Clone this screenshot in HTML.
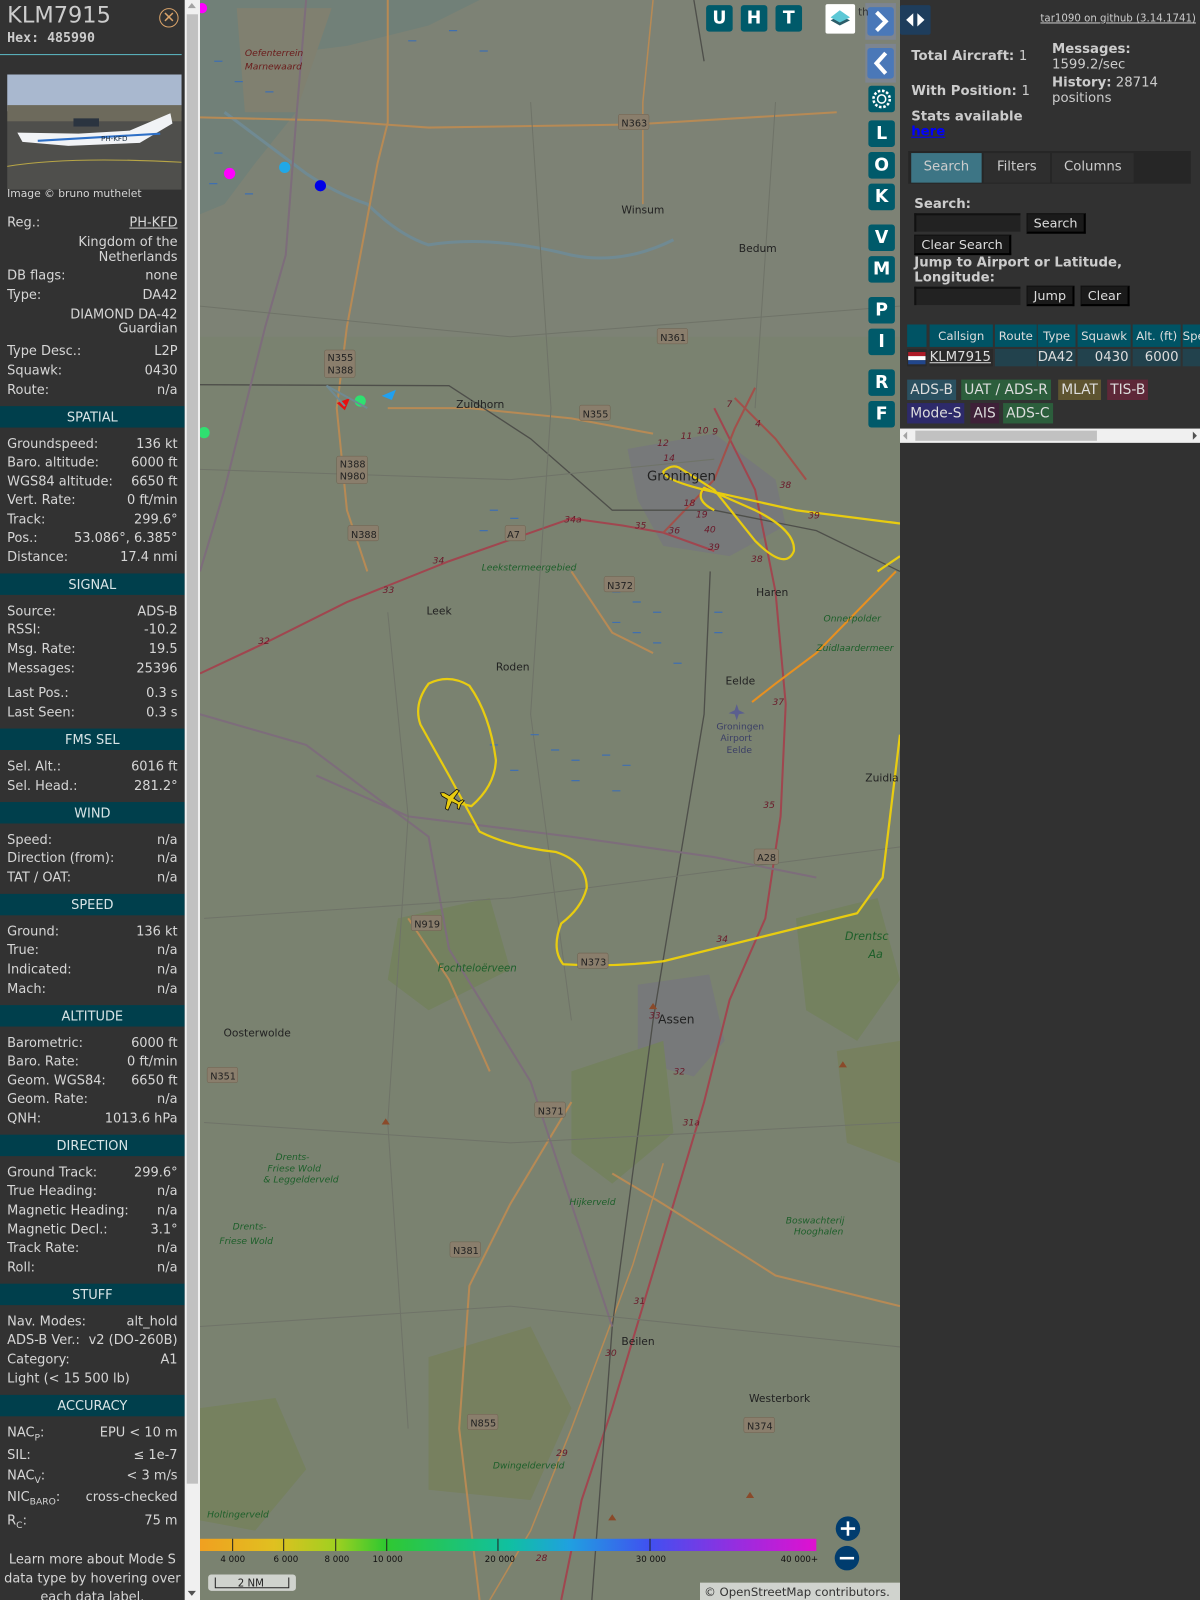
<!DOCTYPE html>
<html><head><meta charset="utf-8">
<style>
html,body{margin:0;padding:0;width:1200px;height:1600px;overflow:hidden;background:#313131;}
#w{position:absolute;left:0;top:0;width:1176px;height:1568px;transform:scale(1.020408);transform-origin:0 0;font-family:"DejaVu Sans","Liberation Sans",sans-serif;color:#d6d6d6;}
#lp{position:absolute;left:0;top:0;width:181px;height:1568px;background:#323232;overflow:hidden;font-size:12.7px;}
.r{position:absolute;left:7px;right:7px;height:18px;line-height:18px;white-space:nowrap;}
.r .v{position:absolute;right:0;top:0;}
.h{position:absolute;left:0;width:181px;height:21px;line-height:21px;background:#003f4c;color:#d8e4e6;text-align:center;font-size:12.7px;}
#sb{position:absolute;left:181px;top:0;width:15px;height:1568px;background:#f0f0f0;}
#map{position:absolute;left:196px;top:0;width:686px;height:1568px;overflow:hidden;background:#7a8270;}
#rp{position:absolute;left:882px;top:0;width:294px;height:1568px;background:#313131;}
.mb{position:absolute;width:26px;height:26px;background:#005a6a;border-radius:3px;color:#fff;font-weight:bold;font-size:17px;text-align:center;line-height:26px;font-family:"DejaVu Sans",sans-serif;}
.tag{position:absolute;height:20px;line-height:20px;font-size:13.5px;padding:0 3px;color:#ddd;}
.btn{position:absolute;background:#1a1a1a;border:1px solid #111;border-right:2px solid #000;border-bottom:2px solid #000;height:17px;line-height:17px;font-size:12.5px;color:#ddd;padding:0 6px;}
.inp{position:absolute;background:#222;border-top:2px solid #111;border-left:2px solid #111;width:102px;height:16px;}
.th{position:absolute;top:318px;height:22px;line-height:22px;background:#005364;color:#ddd;font-size:11.5px;text-align:center;}
.td{position:absolute;top:342px;height:17px;line-height:17px;background:#22424d;color:#ddd;font-size:13px;text-align:right;}
</style></head><body><div id="w">

<div id="lp">
 <div style="position:absolute;left:7px;top:3px;font-size:22px;color:#ccc;">KLM7915</div>
 <div style="position:absolute;left:7px;top:30px;font-size:13px;font-weight:bold;font-family:'DejaVu Sans Mono',monospace;color:#ccc;">Hex: 485990</div>
 <div style="position:absolute;left:156px;top:8px;width:17px;height:17px;border:1.5px solid #d9a36a;border-radius:50%;color:#d9a36a;text-align:center;line-height:17px;font-size:15px;">✕</div>
 <div style="position:absolute;left:0;top:53px;width:178px;height:1px;background:#5bb8c4;"></div>
 <svg style="position:absolute;left:7px;top:73px" width="171" height="113" viewBox="0 0 171 113">
  <rect width="171" height="36" fill="#a9b8cf"/><rect y="30" width="171" height="16" fill="#6d6a5c"/><rect y="46" width="171" height="67" fill="#4f4f4c"/>
  <path d="M0 90 Q60 80 171 86" stroke="#b8a646" stroke-width="1" fill="none"/>
  <path d="M10 57 L70 58 L120 55 L160 38 L162 48 L130 67 L60 70 L15 66Z" fill="#f1f3f6"/>
  <path d="M30 65 L150 58" stroke="#2d6fc6" stroke-width="2"/>
  <rect x="65" y="43" width="25" height="8" fill="#2b3440"/>
  <text x="92" y="65" font-size="7" fill="#234" font-family="DejaVu Sans">PH-KFD</text>
 </svg>
 <div style="position:absolute;left:7px;top:184px;font-size:10.5px;">Image © bruno muthelet</div>
 <div class="r" style="top:209px">Reg.:<span class="v" style="text-decoration:underline">PH-KFD</span></div>
 <div class="r" style="top:228px;text-align:right">Kingdom of the</div>
 <div class="r" style="top:243px;text-align:right">Netherlands</div>
 <div class="r" style="top:261px">DB flags:<span class="v">none</span></div>
 <div class="r" style="top:280px">Type:<span class="v">DA42</span></div>
 <div class="r" style="top:299px;text-align:right">DIAMOND DA-42</div>
 <div class="r" style="top:313px;text-align:right">Guardian</div>
 <div class="r" style="top:335px">Type Desc.:<span class="v">L2P</span></div>
 <div class="r" style="top:354px">Squawk:<span class="v">0430</span></div>
 <div class="r" style="top:373px">Route:<span class="v">n/a</span></div>
 <div class="h" style="top:398px">SPATIAL</div>
 <div class="r" style="top:426px">Groundspeed:<span class="v">136 kt</span></div>
 <div class="r" style="top:444px">Baro. altitude:<span class="v">6000 ft</span></div>
 <div class="r" style="top:463px">WGS84 altitude:<span class="v">6650 ft</span></div>
 <div class="r" style="top:481px">Vert. Rate:<span class="v">0 ft/min</span></div>
 <div class="r" style="top:500px">Track:<span class="v">299.6°</span></div>
 <div class="r" style="top:518px">Pos.:<span class="v">53.086°, 6.385°</span></div>
 <div class="r" style="top:537px">Distance:<span class="v">17.4 nmi</span></div>
 <div class="h" style="top:562px">SIGNAL</div>
 <div class="r" style="top:590px">Source:<span class="v">ADS-B</span></div>
 <div class="r" style="top:608px">RSSI:<span class="v">-10.2</span></div>
 <div class="r" style="top:627px">Msg. Rate:<span class="v">19.5</span></div>
 <div class="r" style="top:646px">Messages:<span class="v">25396</span></div>
 <div class="r" style="top:670px">Last Pos.:<span class="v">0.3 s</span></div>
 <div class="r" style="top:689px">Last Seen:<span class="v">0.3 s</span></div>
 <div class="h" style="top:714px">FMS SEL</div>
 <div class="r" style="top:742px">Sel. Alt.:<span class="v">6016 ft</span></div>
 <div class="r" style="top:761px">Sel. Head.:<span class="v">281.2°</span></div>
 <div class="h" style="top:786px">WIND</div>
 <div class="r" style="top:814px">Speed:<span class="v">n/a</span></div>
 <div class="r" style="top:832px">Direction (from):<span class="v">n/a</span></div>
 <div class="r" style="top:851px">TAT / OAT:<span class="v">n/a</span></div>
 <div class="h" style="top:876px">SPEED</div>
 <div class="r" style="top:904px">Ground:<span class="v">136 kt</span></div>
 <div class="r" style="top:922px">True:<span class="v">n/a</span></div>
 <div class="r" style="top:941px">Indicated:<span class="v">n/a</span></div>
 <div class="r" style="top:960px">Mach:<span class="v">n/a</span></div>
 <div class="h" style="top:985px">ALTITUDE</div>
 <div class="r" style="top:1013px">Barometric:<span class="v">6000 ft</span></div>
 <div class="r" style="top:1031px">Baro. Rate:<span class="v">0 ft/min</span></div>
 <div class="r" style="top:1050px">Geom. WGS84:<span class="v">6650 ft</span></div>
 <div class="r" style="top:1068px">Geom. Rate:<span class="v">n/a</span></div>
 <div class="r" style="top:1087px">QNH:<span class="v">1013.6 hPa</span></div>
 <div class="h" style="top:1112px">DIRECTION</div>
 <div class="r" style="top:1140px">Ground Track:<span class="v">299.6°</span></div>
 <div class="r" style="top:1158px">True Heading:<span class="v">n/a</span></div>
 <div class="r" style="top:1177px">Magnetic Heading:<span class="v">n/a</span></div>
 <div class="r" style="top:1196px">Magnetic Decl.:<span class="v">3.1°</span></div>
 <div class="r" style="top:1214px">Track Rate:<span class="v">n/a</span></div>
 <div class="r" style="top:1233px">Roll:<span class="v">n/a</span></div>
 <div class="h" style="top:1258px">STUFF</div>
 <div class="r" style="top:1286px">Nav. Modes:<span class="v">alt_hold</span></div>
 <div class="r" style="top:1304px">ADS-B Ver.:<span class="v">v2 (DO-260B)</span></div>
 <div class="r" style="top:1323px">Category:<span class="v">A1</span></div>
 <div class="r" style="top:1342px">Light (&lt; 15 500 lb)</div>
 <div class="h" style="top:1367px">ACCURACY</div>
 <div class="r" style="top:1395px">NAC<sub style="font-size:9px">P</sub>:<span class="v">EPU &lt; 10 m</span></div>
 <div class="r" style="top:1417px">SIL:<span class="v">≤ 1e-7</span></div>
 <div class="r" style="top:1437px">NAC<sub style="font-size:9px">V</sub>:<span class="v">&lt; 3 m/s</span></div>
 <div class="r" style="top:1458px">NIC<sub style="font-size:9px">BARO</sub>:<span class="v">cross-checked</span></div>
 <div class="r" style="top:1481px">R<sub style="font-size:9px">C</sub>:<span class="v">75 m</span></div>
 <div style="position:absolute;left:0;width:181px;top:1519px;text-align:center;line-height:18.5px;">Learn more about Mode S<br>data type by hovering over<br>each data label.</div>
</div>
<div id="sb"><div style="position:absolute;left:2px;top:14px;width:11px;height:1440px;background:#c1c1c1;"></div>
 <div style="position:absolute;left:3px;top:3px;border:4px solid transparent;border-bottom:5px solid #a3a3a3;border-top:0;"></div>
 <div style="position:absolute;left:3px;top:1559px;border:4px solid transparent;border-top:5px solid #505050;border-bottom:0;"></div></div>

<div id="map">
<svg width="686" height="1568" viewBox="196 0 686 1568" style="position:absolute;left:0;top:0" font-family="DejaVu Sans,sans-serif">
 <rect x="196" y="0" width="686" height="1568" fill="#7a8270"/>
 <rect x="196" y="0" width="686" height="330" fill="#7d8275"/>
 <path d="M196 0 L470 0 L420 25 L340 45 L300 50 L290 110 L250 160 L220 200 L196 210Z" fill="#718078"/>
 <path d="M232 8 L325 8 L290 110 L240 110Z" fill="#808070"/>
 <path d="M220 110 Q260 140 300 170 Q330 190 360 200 Q390 230 420 240 Q480 230 560 250 Q610 260 660 235" stroke="#708a93" stroke-width="3" fill="none"/>
 <path d="M615 440 L700 425 L760 470 L770 515 L715 545 L650 535 L625 490Z" fill="#77797a"/>
 <path d="M625 965 L695 955 L710 1020 L680 1055 L625 1040Z" fill="#77797a"/>
 <path d="M390 900 L480 880 L500 950 L420 990 L380 960Z" fill="#74815f"/>
 <path d="M560 1050 L650 1020 L660 1110 L600 1160 L560 1130Z" fill="#74815f"/>
 <path d="M420 1330 L520 1300 L560 1380 L520 1470 L420 1460Z" fill="#77805f"/>
 <path d="M196 1380 L270 1370 L300 1440 L250 1500 L196 1490Z" fill="#76815f"/>
 <path d="M780 900 L860 880 L882 960 L840 1020 L790 990Z" fill="#74815f"/>
 <path d="M820 1030 L882 1020 L882 1140 L830 1120Z" fill="#77805f"/>
 <g fill="none" stroke-width="2">
  <path d="M196 660 L260 630 L340 590 L440 550 L560 508 L610 515 L650 522 L700 540" stroke="#a0464f"/>
  <path d="M700 400 L720 440 L740 480 L760 580 L770 690 L765 800 L750 900 L715 980 L690 1080 L660 1180 L630 1280 L600 1380 L570 1470 L550 1568" stroke="#a0464f"/>
  <path d="M720 390 L760 430 L790 470" stroke="#a2504a"/>
  <path d="M650 522 L700 470 L720 420 L740 380" stroke="#a2504a"/>
  <path d="M380 0 L380 120 L370 160 L340 320 L330 400 L340 500 L360 560" stroke="#b78a55"/>
  <path d="M196 115 L320 118 L420 125 L620 122 L820 110" stroke="#b78a55"/>
  <path d="M380 400 L460 400 L560 410 L640 425" stroke="#b78a55"/>
  <path d="M560 560 L600 620 L640 640" stroke="#b78a55"/>
  <path d="M400 900 L440 960 L480 1050" stroke="#b78a55"/>
  <path d="M560 1080 L500 1180 L460 1260 L450 1400 L470 1568" stroke="#b78a55"/>
  <path d="M600 1150 L650 1180 L760 1250 L882 1280" stroke="#b78a55"/>
  <path d="M630 200 L630 100 L640 0" stroke="#b78a55" stroke-width="1.5"/>
  <path d="M480 1568 L520 1500 L560 1400 L620 1240 L650 1140" stroke="#b78a55" stroke-width="1.5"/>
 </g>
 <g fill="none" stroke="#4e4f4a" stroke-width="1.3">
  <path d="M196 377 L440 378 L520 430 L600 500 L700 500 L800 520 L882 560"/>
  <path d="M696 560 L690 700 L640 1000 L600 1300 L580 1568"/>
  <path d="M680 0 L690 60"/>
 </g>
 <g fill="none" stroke="#7d6d7b" stroke-width="2">
  <path d="M300 0 L290 120 L280 250 L260 320 L240 400 L220 480 L196 560"/>
  <path d="M196 700 L300 730 L420 820 L440 930 L520 1060 L560 1180 L600 1300"/>
  <path d="M310 760 L400 800 L560 820 L700 840 L800 860"/>
 </g>
 <g fill="none" stroke="#6f7368" stroke-width="1">
  <path d="M196 300 L500 330 L882 300"/><path d="M196 460 L500 470 L700 450"/><path d="M200 900 L500 880 L882 830"/>
  <path d="M200 1100 L500 1120 L882 1100"/><path d="M196 1300 L500 1280 L882 1320"/><path d="M520 100 L540 400 L520 700 L560 1000"/>
  <path d="M380 600 L400 800 L380 1100 L400 1400"/><path d="M760 100 L740 400"/>
 </g>
 <g stroke="#3f6fb0" stroke-width="1.2">
  <path d="M480 500h8M500 508h8M470 520h8M520 720h8M540 735h8M560 745h8M500 755h8M590 740h8M610 750h8M480 730h8M560 765h8M600 775h8"/>
  <path d="M600 580h8M620 590h8M640 600h8M600 610h8M620 620h8M640 630h8M700 600h8M700 620h8M660 650h8"/>
  <path d="M210 60h8M230 80h8M260 90h8M400 40h8M440 30h8M470 50h8M210 150h8M205 180h8M240 190h8"/>
 </g>
 <g fill="none" stroke="#e8cc10" stroke-width="2.2" stroke-linejoin="round">
  <path d="M440 785 L462 790 Q485 770 486 745 Q480 700 460 672 Q440 660 420 670 Q405 690 412 710 L440 760 L470 815 Q500 830 545 835 Q575 845 575 870 Q570 890 550 905 Q540 930 552 945 Q600 948 650 942 L840 895 L865 860 L882 720"/>
  <path d="M882 513 L780 500 L690 480 Q650 470 650 462 Q658 455 665 458 L700 480 L740 530 Q770 560 778 540 Q780 520 740 500 L690 478 Q680 490 700 500"/>
  <path d="M882 545 L860 560"/>
 </g>
 <path d="M878 560 L800 640 L760 670 L737 688" stroke="#e89020" stroke-width="2" fill="none"/>
 <g transform="translate(442 783) rotate(-60)" fill="#e8cc10" stroke="#111" stroke-width="0.8">
  <path d="M0 -12 L2 -9 L2 -3 L11 0 L11 3 L2 2 L1.5 8 L5 10 L5 12 L0 11 L-5 12 L-5 10 L-1.5 8 L-2 2 L-11 3 L-11 0 L-2 -3 L-2 -9Z"/>
 </g>
 <path d="M722 690 l2 6 l6 3 l-6 1 l-2 6 l-2 -6 l-6 -1 l6 -3z" fill="#5b5f8f"/>
 <circle cx="225" cy="170" r="5.5" fill="#f0f"/><circle cx="279" cy="164" r="5.5" fill="#20a8e8"/><circle cx="314" cy="182" r="5.5" fill="#0000e8"/>
 <circle cx="198" cy="8" r="5" fill="#f0f"/><circle cx="200" cy="424" r="5.5" fill="#2fe070"/><circle cx="353" cy="393" r="5.5" fill="#2fe070"/>
 <path d="M330 395 L343 390 L338 402Z" fill="#e81010"/><path d="M374 388 L388 382 L384 392Z" fill="#20a0f0"/>
 <path d="M338 398 L320 378 L360 400" stroke="#708a93" stroke-width="2" fill="none"/>
 <g font-size="10.5" fill="#222">
  <text x="609" y="209">Winsum</text><text x="724" y="247">Bedum</text><text x="447" y="400">Zuidhorn</text>
  <text x="634" y="471" font-size="13">Groningen</text><text x="741" y="584">Haren</text><text x="418" y="602">Leek</text>
  <text x="486" y="657">Roden</text><text x="711" y="671">Eelde</text><text x="645" y="1003" font-size="12">Assen</text>
  <text x="219" y="1016">Oosterwolde</text><text x="609" y="1318">Beilen</text><text x="734" y="1374">Westerbork</text>
  <text x="848" y="766">Zuidla</text>
 </g>
 <g font-size="9" fill="#1d5f2a" font-style="italic">
  <text x="472" y="559">Leekstermeergebied</text><text x="429" y="952" font-size="10">Fochteloërveen</text>
  <text x="270" y="1137">Drents-</text><text x="262" y="1148">Friese Wold</text><text x="258" y="1159">&amp; Leggelderveld</text>
  <text x="228" y="1205">Drents-</text><text x="215" y="1219">Friese Wold</text><text x="558" y="1181">Hijkerveld</text>
  <text x="483" y="1439">Dwingelderveld</text><text x="203" y="1487">Holtingerveld</text><text x="770" y="1199">Boswachterij</text>
  <text x="778" y="1210">Hooghalen</text><text x="828" y="921" font-size="11">Drentsc</text><text x="851" y="939" font-size="11">Aa</text>
  <text x="807" y="609">Onnerpolder</text><text x="800" y="638">Zuidlaardermeer</text>
  <text x="702" y="715" fill="#3b3f66" font-style="normal">Groningen</text><text x="706" y="726" fill="#3b3f66" font-style="normal">Airport</text><text x="712" y="738" fill="#3b3f66" font-style="normal">Eelde</text>
 </g>
 <g font-size="9" fill="#6a1a1a" font-style="italic"><text x="240" y="55">Oefenterrein</text><text x="240" y="68">Marnewaard</text></g>
 <g font-size="9" fill="#6a1a2a" font-style="italic">
  <text x="253" y="631">32</text><text x="375" y="581">33</text><text x="424" y="552">34</text><text x="553" y="512">34a</text><text x="622" y="518">35</text>
  <text x="655" y="523">36</text><text x="670" y="496">18</text><text x="682" y="507">19</text><text x="690" y="522">40</text><text x="694" y="539">39</text>
  <text x="644" y="437">12</text><text x="667" y="430">11</text><text x="683" y="425">10</text><text x="698" y="426">9</text><text x="650" y="452">14</text>
  <text x="712" y="399">7</text><text x="740" y="418">4</text><text x="736" y="551">38</text><text x="757" y="691">37</text><text x="748" y="792">35</text>
  <text x="702" y="923">34</text><text x="636" y="998">33</text><text x="660" y="1053">32</text><text x="669" y="1103">31a</text><text x="621" y="1278">31</text>
  <text x="593" y="1329">30</text><text x="545" y="1427">29</text><text x="525" y="1530">28</text><text x="764" y="478">38</text><text x="792" y="508">39</text>
 </g>
 <g font-size="9.5" fill="#222">
  <g fill="#8a7e6c" stroke="#6e614f" stroke-width="0.5">
   <rect x="606" y="112" width="30" height="15" rx="2"/><rect x="318" y="343" width="30" height="27" rx="2"/><rect x="644" y="322" width="30" height="15" rx="2"/>
   <rect x="568" y="397" width="30" height="15" rx="2"/><rect x="330" y="447" width="30" height="27" rx="2"/><rect x="341" y="515" width="30" height="15" rx="2"/>
   <rect x="592" y="565" width="30" height="15" rx="2"/><rect x="495" y="515" width="20" height="15" rx="2"/><rect x="403" y="897" width="30" height="15" rx="2"/>
   <rect x="566" y="934" width="30" height="15" rx="2"/><rect x="739" y="832" width="24" height="15" rx="2"/><rect x="203" y="1046" width="30" height="15" rx="2"/>
   <rect x="524" y="1080" width="30" height="15" rx="2"/><rect x="441" y="1217" width="30" height="15" rx="2"/><rect x="458" y="1386" width="30" height="15" rx="2"/>
   <rect x="729" y="1389" width="30" height="15" rx="2"/>
  </g>
  <text x="609" y="124">N363</text><text x="321" y="354">N355</text><text x="321" y="366">N388</text><text x="647" y="334">N361</text>
  <text x="571" y="409">N355</text><text x="333" y="458">N388</text><text x="333" y="470">N980</text><text x="344" y="527">N388</text>
  <text x="595" y="577">N372</text><text x="497" y="527">A7</text><text x="406" y="909">N919</text><text x="569" y="946">N373</text>
  <text x="742" y="844">A28</text><text x="206" y="1058">N351</text><text x="527" y="1092">N371</text><text x="444" y="1229">N381</text>
  <text x="461" y="1398">N855</text><text x="732" y="1401">N374</text>
 </g>
 <g fill="#8a4a2a"><path d="M378 1096l4 6h-8z"/><path d="M640 983l4 6h-8z"/><path d="M826 1040l4 6h-8z"/><path d="M600 1484l4 6h-8z"/><path d="M735 1462l4 6h-8z"/></g>
 <defs><linearGradient id="g" x1="0" x2="1"><stop offset="0" stop-color="#f0a020"/><stop offset="0.12" stop-color="#e0c020"/><stop offset="0.22" stop-color="#a0d020"/><stop offset="0.3" stop-color="#30c830"/><stop offset="0.5" stop-color="#10c0a0"/><stop offset="0.6" stop-color="#20a0e0"/><stop offset="0.73" stop-color="#4050f0"/><stop offset="0.86" stop-color="#9030e0"/><stop offset="1" stop-color="#e010d0"/></linearGradient></defs>
 <rect x="196" y="1508" width="604" height="12" fill="url(#g)"/>
 <g stroke="#222" stroke-width="1"><path d="M228 1508v12M278 1508v12M329 1508v12M379 1508v12M488 1508v12M637 1508v12"/></g>
 <g font-size="8.5" fill="#111"><text x="216" y="1531">4 000</text><text x="268" y="1531">6 000</text><text x="318" y="1531">8 000</text><text x="365" y="1531">10 000</text><text x="475" y="1531">20 000</text><text x="623" y="1531">30 000</text><text x="765" y="1531">40 000+</text></g>
 <rect x="204" y="1543" width="86" height="16" rx="3" fill="#eee" fill-opacity="0.75"/>
 <path d="M211 1546v10h72v-10" stroke="#222" fill="none"/>
 <text x="233" y="1555" font-size="10" fill="#222">2 NM</text>
 <rect x="686" y="1551" width="196" height="17" fill="#eee" fill-opacity="0.75"/>
 <text x="690" y="1564" font-size="11.5" fill="#333">© OpenStreetMap contributors.</text>
 <circle cx="831" cy="1498" r="12" fill="#003c6e"/><path d="M824 1498h14M831 1491v14" stroke="#fff" stroke-width="2.5"/>
 <circle cx="830" cy="1527" r="12" fill="#003c6e"/><path d="M823 1527h14" stroke="#fff" stroke-width="2.5"/>
</svg>
 <div class="mb" style="left:496px;top:5px">U</div><div class="mb" style="left:530px;top:5px">H</div><div class="mb" style="left:564px;top:5px">T</div>
 <div style="position:absolute;left:613px;top:4px;width:29px;height:29px;background:#fff;border-radius:2px;"><svg width="29" height="29"><path d="M5 16 L14 21 L24 16 L14 11Z" fill="#2b5d6a"/><path d="M5 13 L14 18 L24 13 L14 6Z" fill="#5dc8d6"/></svg></div>
 <div style="position:absolute;left:652px;top:3px;width:30px;height:36px;background:#7d8590;"><div style="margin:4px 2px;width:26px;height:28px;background:#4a78b8;border-radius:3px;"><svg width="26" height="28"><path d="M9 5 L18 14 L9 23" stroke="#fff" stroke-width="4" fill="none"/></svg></div></div>
 <div style="position:absolute;left:652px;top:43px;width:30px;height:38px;background:#7d8590;"><div style="margin:4px 2px;width:26px;height:30px;background:#4a78b8;border-radius:3px;"><svg width="26" height="30"><path d="M18 5 L9 15 L18 25" stroke="#fff" stroke-width="4" fill="none"/></svg></div></div>
 <div class="mb" style="left:655px;top:84px"><svg width="26" height="26"><circle cx="13" cy="13" r="4" stroke="#fff" stroke-width="1.5" fill="none"/><circle cx="13" cy="13" r="8" stroke="#fff" stroke-width="2.5" stroke-dasharray="2.5 1.7" fill="none"/></svg></div>
 <div class="mb" style="left:655px;top:118px">L</div><div class="mb" style="left:655px;top:149px">O</div><div class="mb" style="left:655px;top:180px">K</div>
 <div class="mb" style="left:655px;top:220px">V</div><div class="mb" style="left:655px;top:251px">M</div><div class="mb" style="left:655px;top:291px">P</div>
 <div class="mb" style="left:655px;top:322px">I</div><div class="mb" style="left:655px;top:362px">R</div><div class="mb" style="left:655px;top:393px">F</div>
 <div style="position:absolute;left:645px;top:7px;font-size:10px;color:#333;">th</div>
</div>

<div id="rp">
 <div style="position:absolute;left:0;top:5px;width:30px;height:29px;background:#1e3d5c;border-radius:2px;"><svg width="30" height="29"><path d="M13 8 L6 14.5 L13 21Z M17 8 L24 14.5 L17 21Z" fill="#fff"/></svg></div>
 <div style="position:absolute;right:4px;top:13px;font-size:10px;text-decoration:underline;color:#ccc;">tar1090 on github (3.14.1741)</div>
 <div style="position:absolute;left:11px;top:48px;font-weight:bold;font-size:13px;color:#ccc;">Total Aircraft: <span style="font-weight:normal">1</span></div>
 <div style="position:absolute;left:11px;top:82px;font-weight:bold;font-size:13px;color:#ccc;">With Position: <span style="font-weight:normal">1</span></div>
 <div style="position:absolute;left:11px;top:107px;font-weight:bold;font-size:13px;color:#ccc;">Stats available</div>
 <div style="position:absolute;left:11px;top:122px;font-weight:bold;font-size:13px;color:#00f;text-decoration:underline;">here</div>
 <div style="position:absolute;left:149px;top:41px;font-size:13px;color:#ccc;line-height:15px;"><b>Messages:</b><br>1599.2/sec</div>
 <div style="position:absolute;left:149px;top:74px;font-size:13px;color:#ccc;line-height:15px;"><b>History:</b> 28714<br>positions</div>
 <div style="position:absolute;left:8px;top:148px;width:277px;height:32px;background:#262626;"></div>
 <div style="position:absolute;left:11px;top:150px;width:69px;height:29px;background:#3d7585;color:#ccc;font-size:13px;text-align:center;line-height:27px;">Search</div>
 <div style="position:absolute;left:82px;top:150px;width:65px;height:29px;background:#2e2e2e;color:#ccc;font-size:13px;text-align:center;line-height:27px;">Filters</div>
 <div style="position:absolute;left:149px;top:150px;width:80px;height:29px;background:#2e2e2e;color:#ccc;font-size:13px;text-align:center;line-height:27px;">Columns</div>
 <div style="position:absolute;left:14px;top:193px;font-weight:bold;font-size:13px;color:#ccc;">Search:</div>
 <div class="inp" style="left:14px;top:209px"></div><div class="btn" style="left:124px;top:209px">Search</div>
 <div class="btn" style="left:14px;top:230px">Clear Search</div>
 <div style="position:absolute;left:14px;top:250px;font-weight:bold;font-size:13px;color:#ccc;line-height:15px;">Jump to Airport or Latitude,<br>Longitude:</div>
 <div class="inp" style="left:14px;top:281px"></div><div class="btn" style="left:124px;top:280px">Jump</div><div class="btn" style="left:177px;top:280px">Clear</div>
 <div class="th" style="left:7px;width:19px"></div>
 <div class="th" style="left:29px;width:62px">Callsign</div><div class="th" style="left:93px;width:41px">Route</div><div class="th" style="left:135px;width:37px">Type</div>
 <div class="th" style="left:174px;width:52px">Squawk</div><div class="th" style="left:228px;width:47px">Alt. (ft)</div><div class="th" style="left:277px;width:17px;text-align:left">Spe</div>
 <div class="td" style="left:7px;width:19px;background:#2a2a2a"><svg width="19" height="17" style="display:block"><rect x="1" y="3" width="17" height="4" fill="#ae1c28"/><rect x="1" y="7" width="17" height="4" fill="#fff"/><rect x="1" y="11" width="17" height="4" fill="#21468b"/></svg></div>
 <div class="td" style="left:29px;width:62px;text-align:left;background:#2a2a2a;text-decoration:underline">KLM7915</div>
 <div class="td" style="left:93px;width:41px"></div><div class="td" style="left:135px;width:37px;text-align:left">DA42</div>
 <div class="td" style="left:174px;width:50px;padding-right:2px">0430</div><div class="td" style="left:228px;width:45px;padding-right:2px">6000</div><div class="td" style="left:277px;width:17px"></div>
 <div class="tag" style="left:7px;top:372px;background:#2a5060">ADS-B</div>
 <div class="tag" style="left:60px;top:372px;background:#2c5e3c">UAT / ADS-R</div>
 <div class="tag" style="left:155px;top:372px;background:#5e5430">MLAT</div>
 <div class="tag" style="left:203px;top:372px;background:#5e2838">TIS-B</div>
 <div class="tag" style="left:7px;top:395px;background:#2d2a6a">Mode-S</div>
 <div class="tag" style="left:69px;top:395px;background:#3e2038">AIS</div>
 <div class="tag" style="left:101px;top:395px;background:#2c5e3c">ADS-C</div>
 <div style="position:absolute;left:0;top:420px;width:294px;height:14px;background:#f0f0f0;"><div style="position:absolute;left:15px;top:2px;width:178px;height:10px;background:#c1c1c1;"></div>
  <div style="position:absolute;left:3px;top:3px;border:4px solid transparent;border-right:4px solid #a3a3a3;border-left:0;"></div>
  <div style="position:absolute;right:3px;top:3px;border:4px solid transparent;border-left:4px solid #505050;border-right:0;"></div></div>
</div>
</div></body></html>
